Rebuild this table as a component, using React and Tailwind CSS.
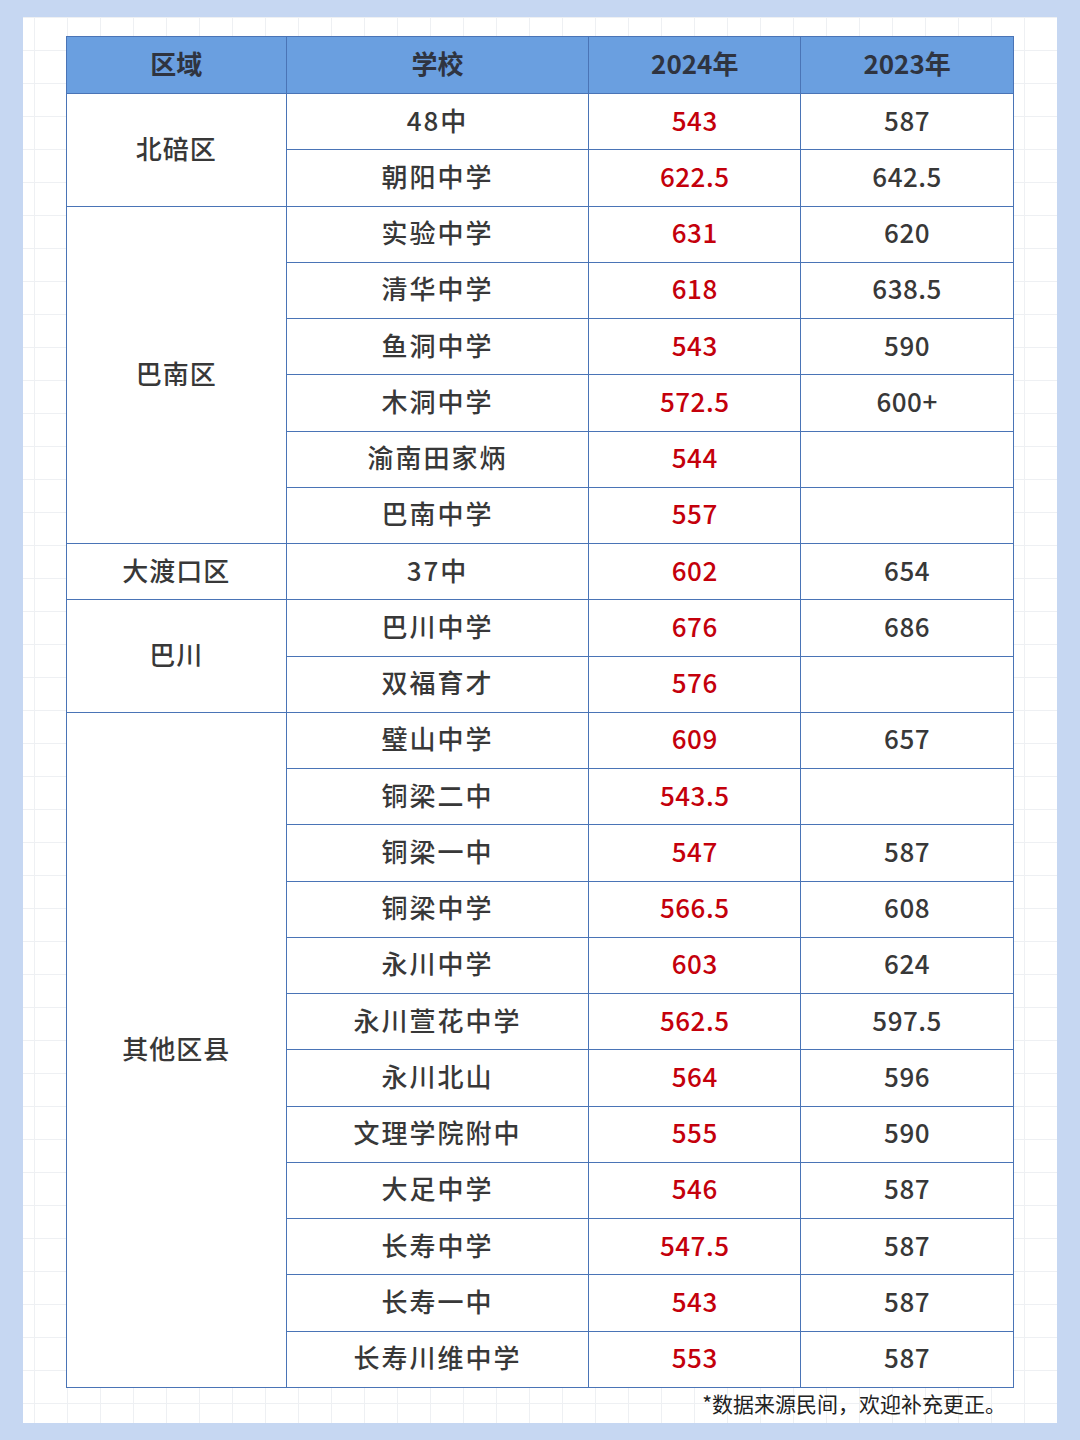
import React from 'react'

const groups = [
  { area: '北碚区', rows: [['48中', '543', '587'], ['朝阳中学', '622.5', '642.5']] },
  {
    area: '巴南区',
    rows: [
      ['实验中学', '631', '620'],
      ['清华中学', '618', '638.5'],
      ['鱼洞中学', '543', '590'],
      ['木洞中学', '572.5', '600+'],
      ['渝南田家炳', '544', ''],
      ['巴南中学', '557', ''],
    ],
  },
  { area: '大渡口区', rows: [['37中', '602', '654']] },
  { area: '巴川', rows: [['巴川中学', '676', '686'], ['双福育才', '576', '']] },
  {
    area: '其他区县',
    rows: [
      ['璧山中学', '609', '657'],
      ['铜梁二中', '543.5', ''],
      ['铜梁一中', '547', '587'],
      ['铜梁中学', '566.5', '608'],
      ['永川中学', '603', '624'],
      ['永川萱花中学', '562.5', '597.5'],
      ['永川北山', '564', '596'],
      ['文理学院附中', '555', '590'],
      ['大足中学', '546', '587'],
      ['长寿中学', '547.5', '587'],
      ['长寿一中', '543', '587'],
      ['长寿川维中学', '553', '587'],
    ],
  },
]

const cell = 'border border-[#4a74b6] text-center align-middle p-0 pb-[5px]'

const App = () => {
  return (
    <div
      className="w-[1080px] h-[1440px] bg-[#c6d7f2] pt-[17px] pl-[23px] pr-[23px] pb-[17px]"
      style={{ fontFamily: '"Noto Sans CJK SC", "Noto Sans", sans-serif' }}
    >
      <div className="w-full h-full bg-white bg-[linear-gradient(to_right,#eef0f3_1px,transparent_1px),linear-gradient(to_bottom,#eef0f3_1px,transparent_1px)] bg-size-[33px_33px] bg-position-[11px_0px] pt-[19px] pl-[43px] pr-[43px]">
        <table className="w-[948px] border-collapse bg-white text-[#383838] text-[26px] font-medium">
          <colgroup>
            <col className="w-[220px]" />
            <col className="w-[303px]" />
            <col className="w-[212px]" />
            <col className="w-[213px]" />
          </colgroup>
          <thead>
            <tr className="h-[57px] bg-[#6a9fe0] font-bold text-[#2f3440]">
              <th className={cell}>区域</th>
              <th className={cell}>学校</th>
              <th className={cell}>2024年</th>
              <th className={cell}>2023年</th>
            </tr>
          </thead>
          <tbody>
            {groups.map((g) =>
              g.rows.map((r, i) => (
                <tr key={g.area + r[0]} className="h-[56.26px]">
                  {i === 0 && (
                    <td rowSpan={g.rows.length} className={`${cell} tracking-[1px]`}>
                      {g.area}
                    </td>
                  )}
                  <td className={`${cell} tracking-[2px]`}>{r[0]}</td>
                  <td className={`${cell} text-[#c4000b] tracking-[0.5px]`}>{r[1]}</td>
                  <td className={`${cell} tracking-[0.5px]`}>{r[2]}</td>
                </tr>
              ))
            )}
          </tbody>
        </table>
        <div className="w-[948px] text-right pr-[8px] text-[21px] text-[#222222] leading-[30px]">
          *数据来源民间，欢迎补充更正。
        </div>
      </div>
    </div>
  )
}

export default App
